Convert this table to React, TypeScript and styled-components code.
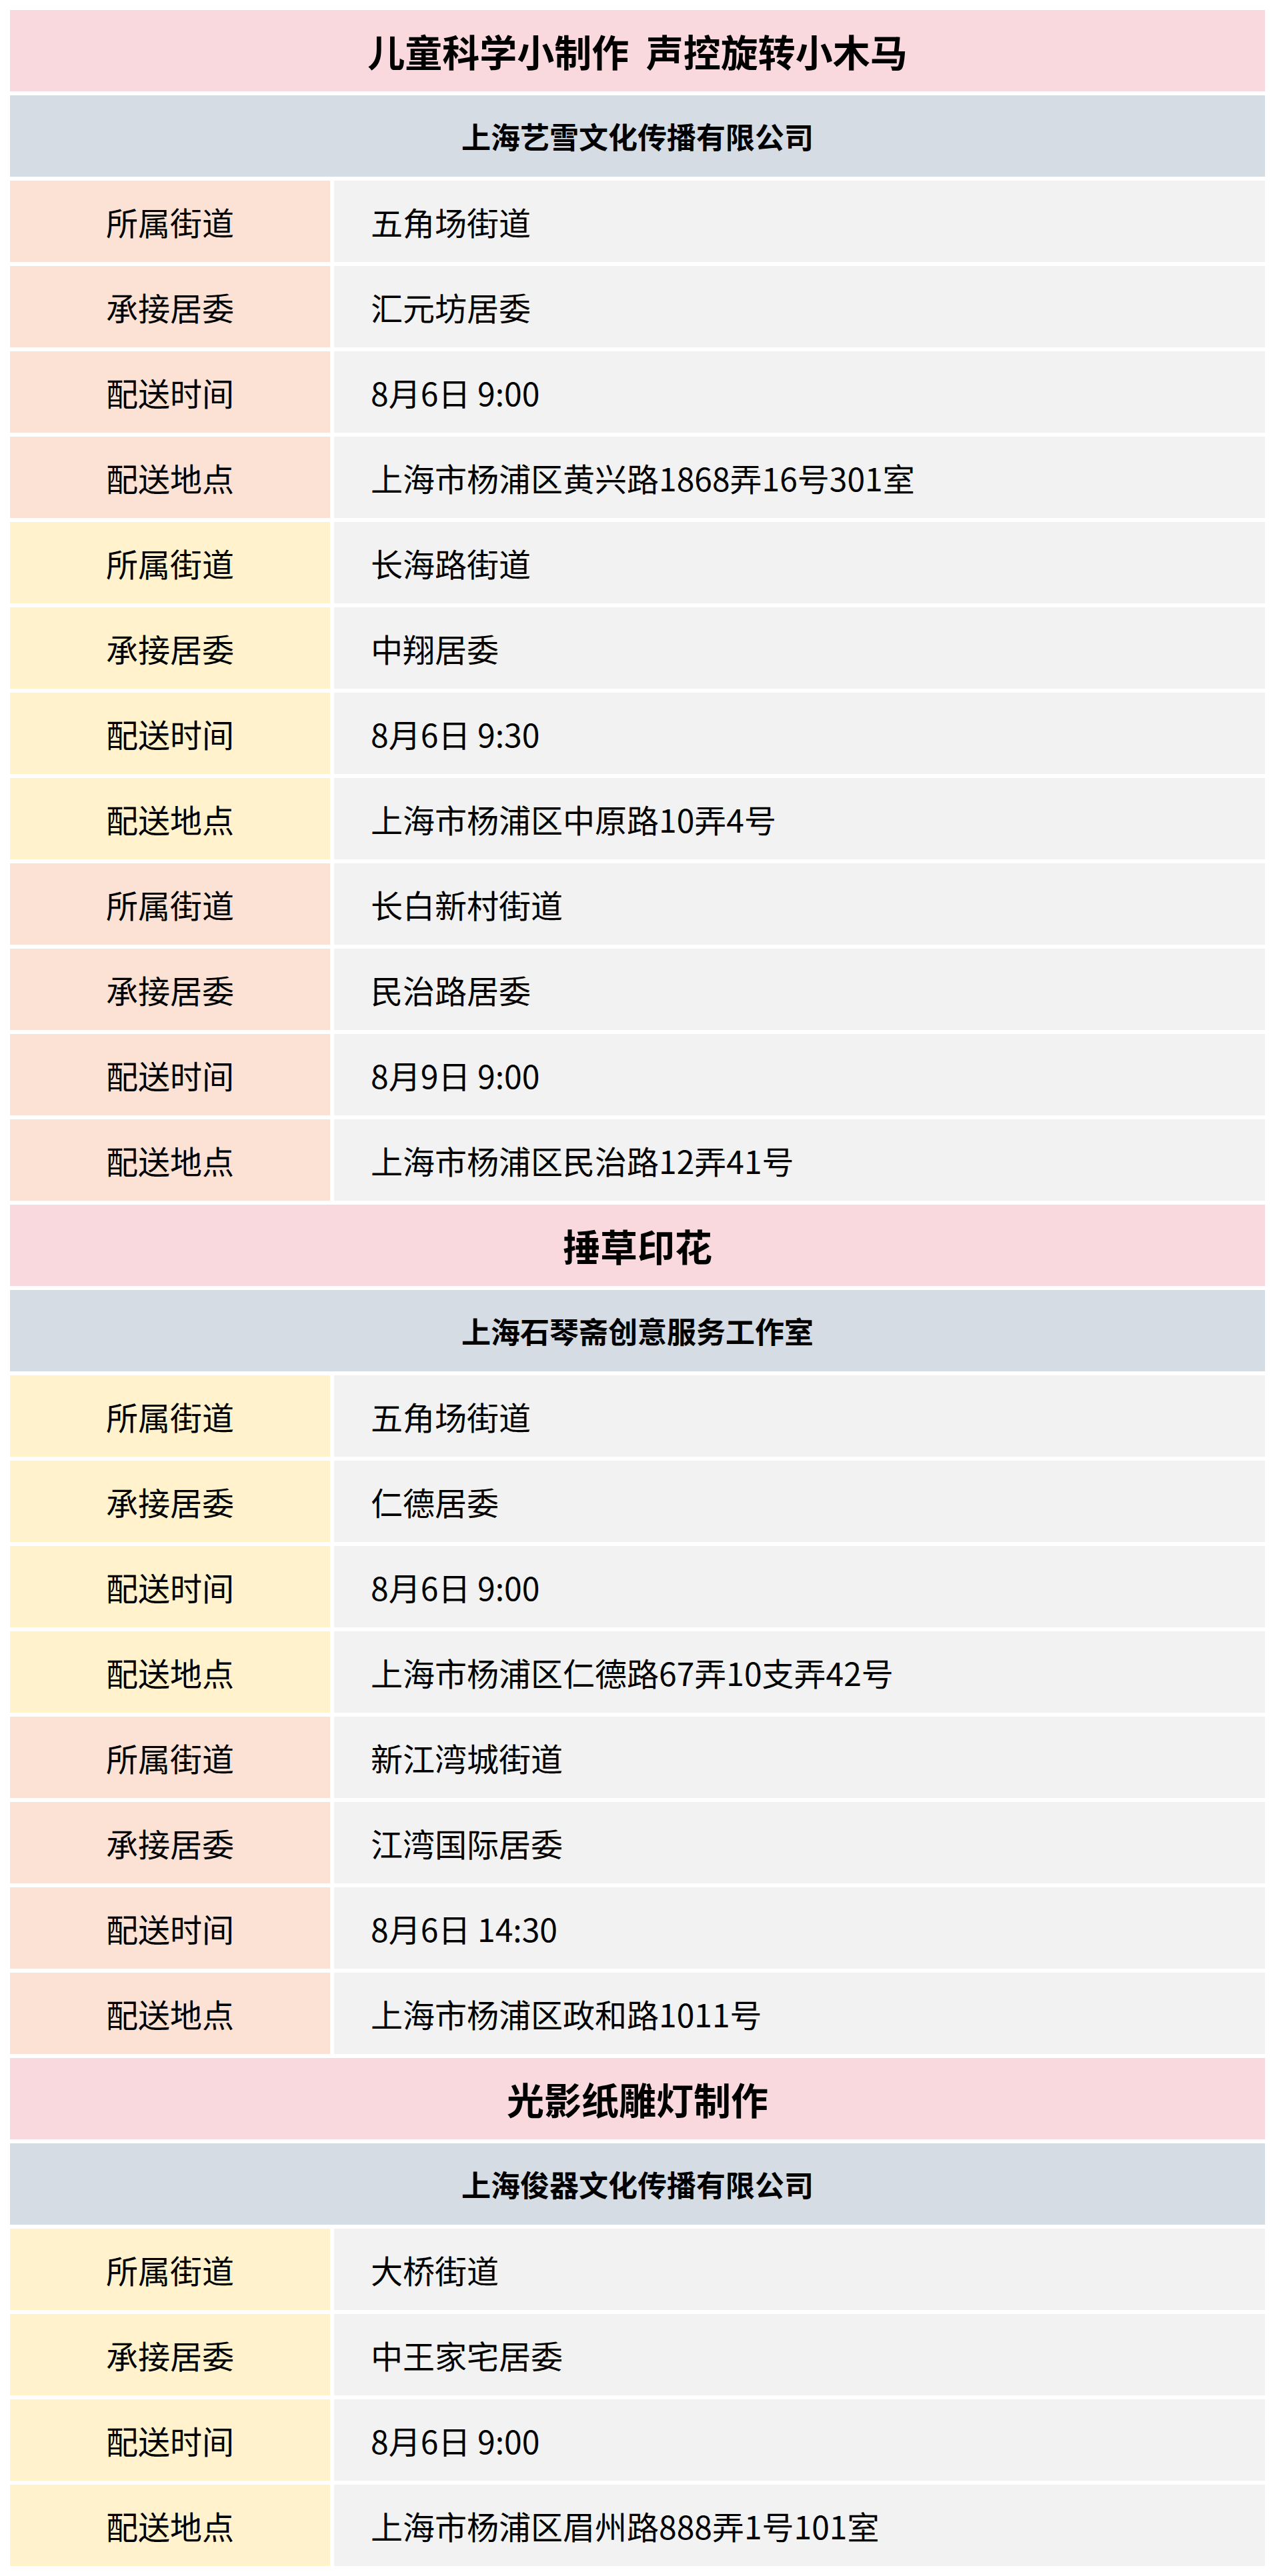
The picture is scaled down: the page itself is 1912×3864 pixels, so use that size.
import React from "react";
import styled, { createGlobalStyle } from "styled-components";

const GlobalStyle = createGlobalStyle`
  html, body {
    margin: 0;
    padding: 0;
    background: #ffffff;
  }
  body {
    font-family: "Microsoft YaHei", "Noto Sans CJK SC", "Noto Sans", sans-serif;
    color: #000000;
  }
`;

const Page = styled.div`
  width: 1912px;
  box-sizing: border-box;
  padding: 15px 15px;
  display: flex;
  flex-direction: column;
  gap: 6px;
`;

const Banner = styled.div<{ $tone: "title" | "company" }>`
  height: 122px;
  display: flex;
  align-items: center;
  justify-content: center;
  background-color: ${(p) => (p.$tone === "title" ? "#f9d9de" : "#d5dce4")};
  font-size: ${(p) => (p.$tone === "title" ? "56px" : "44px")};
  font-weight: 700;
  white-space: pre;
  line-height: 1;
`;

const Row = styled.div`
  height: 122px;
  display: flex;
  flex-direction: row;
  gap: 6px;
`;

const Label = styled.div<{ $tone: "peach" | "yellow" }>`
  width: 480px;
  flex-shrink: 0;
  display: flex;
  align-items: center;
  justify-content: center;
  background-color: ${(p) => (p.$tone === "peach" ? "#fbe2d5" : "#fff2cc")};
  font-size: 48px;
  line-height: 1;
`;

const Value = styled.div`
  flex: 1;
  display: flex;
  align-items: center;
  padding-left: 55px;
  background-color: #f2f2f2;
  font-size: 48px;
  line-height: 1;
`;

type Stop = {
  street: string;
  committee: string;
  time: string;
  address: string;
};

type Section = {
  title: string;
  company: string;
  tones: ("peach" | "yellow")[];
  stops: Stop[];
};

const sections: Section[] = [
  {
    title: "儿童科学小制作  声控旋转小木马",
    company: "上海艺雪文化传播有限公司",
    tones: ["peach", "yellow", "peach"],
    stops: [
      {
        street: "五角场街道",
        committee: "汇元坊居委",
        time: "8月6日 9:00",
        address: "上海市杨浦区黄兴路1868弄16号301室",
      },
      {
        street: "长海路街道",
        committee: "中翔居委",
        time: "8月6日 9:30",
        address: "上海市杨浦区中原路10弄4号",
      },
      {
        street: "长白新村街道",
        committee: "民治路居委",
        time: "8月9日 9:00",
        address: "上海市杨浦区民治路12弄41号",
      },
    ],
  },
  {
    title: "捶草印花",
    company: "上海石琴斋创意服务工作室",
    tones: ["yellow", "peach"],
    stops: [
      {
        street: "五角场街道",
        committee: "仁德居委",
        time: "8月6日 9:00",
        address: "上海市杨浦区仁德路67弄10支弄42号",
      },
      {
        street: "新江湾城街道",
        committee: "江湾国际居委",
        time: "8月6日 14:30",
        address: "上海市杨浦区政和路1011号",
      },
    ],
  },
  {
    title: "光影纸雕灯制作",
    company: "上海俊器文化传播有限公司",
    tones: ["yellow"],
    stops: [
      {
        street: "大桥街道",
        committee: "中王家宅居委",
        time: "8月6日 9:00",
        address: "上海市杨浦区眉州路888弄1号101室",
      },
    ],
  },
];

const InfoRow = ({
  tone,
  label,
  value,
}: {
  tone: "peach" | "yellow";
  label: string;
  value: string;
}) => (
  <Row>
    <Label $tone={tone}>{label}</Label>
    <Value>{value}</Value>
  </Row>
);

const App = () => {
  return (
    <>
      <GlobalStyle />
      <Page>
        {sections.map((section) => (
          <React.Fragment key={section.title}>
            <Banner $tone="title">{section.title}</Banner>
            <Banner $tone="company">{section.company}</Banner>
            {section.stops.map((stop, i) => {
              const tone = section.tones[i];
              return (
                <React.Fragment key={stop.street + i}>
                  <InfoRow tone={tone} label="所属街道" value={stop.street} />
                  <InfoRow tone={tone} label="承接居委" value={stop.committee} />
                  <InfoRow tone={tone} label="配送时间" value={stop.time} />
                  <InfoRow tone={tone} label="配送地点" value={stop.address} />
                </React.Fragment>
              );
            })}
          </React.Fragment>
        ))}
      </Page>
    </>
  );
};

export default App;
